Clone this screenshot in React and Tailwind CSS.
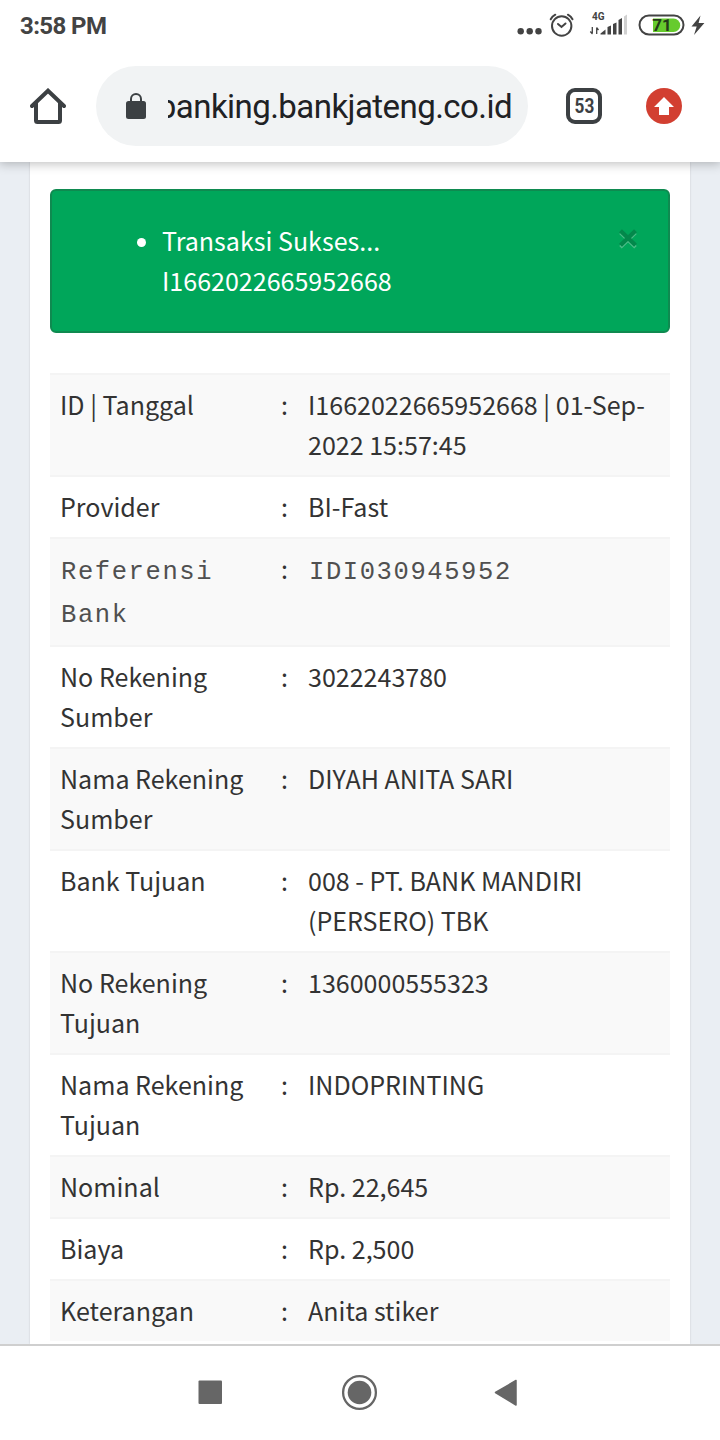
const rows = [
  ['ID | Tanggal', 'I1662022665952668 | 01-Sep-2022 15:57:45'],
  ['Provider', 'BI-Fast'],
  ['Referensi Bank', 'IDI030945952', true],
  ['No Rekening Sumber', '3022243780'],
  ['Nama Rekening Sumber', 'DIYAH ANITA SARI'],
  ['Bank Tujuan', '008 - PT. BANK MANDIRI (PERSERO) TBK'],
  ['No Rekening Tujuan', '1360000555323'],
  ['Nama Rekening Tujuan', 'INDOPRINTING'],
  ['Nominal', 'Rp. 22,645'],
  ['Biaya', 'Rp. 2,500'],
  ['Keterangan', 'Anita stiker'],
];

const MONO = "mt-[3px] -mb-[3px] font-['Liberation_Mono',monospace] text-[25.500px] leading-[43px] tracking-[1.600px] text-[#505050]";

function StatusBar() {
  return (
    <div className="flex h-[52px] items-center justify-between pl-5 font-['Roboto',sans-serif] text-[#434343]">
      <span className="text-[24px] leading-[28px] font-bold tracking-[-0.6px]">3:58 PM</span>
      <svg width="210" height="52" viewBox="510 0 210 52" className="shrink-0">
        <g fill="#434343">
          <circle cx="520.7" cy="31.3" r="3.2" />
          <circle cx="529.7" cy="31.3" r="3.2" />
          <circle cx="538.5" cy="31.3" r="3.2" />
        </g>
        <g fill="none" stroke="#434343" strokeWidth="2" strokeLinecap="round">
          <circle cx="561.7" cy="26" r="9.7" />
          <path d="M550.7 19.3Q552.3 16.3 555.3 14.7M572.5 19.3Q570.9 16.3 567.9 14.7M558 24l3.5 3 4-3.5" />
        </g>
        <text x="592" y="20" fontSize="10" fontWeight="700" fill="#434343">4G</text>
        <path d="M592.3 27v6M590.3 31.5l2.2 2.5M596.7 34v-6M598.5 30l-2-2.5" fill="none" stroke="#434343" strokeWidth="1.3" />
        <g fill="#434343">
          <path d="M600.5 34.5v-1l5-4v5z" />
          <path d="M607.5 34.5v-7.500l3.500-1.500v9z" />
          <path d="M613 34.500V24l3.500-1.500v12z" />
          <path d="M618.500 34.500V20l3.500-2v16.500z" />
        </g>
        <path d="M624 34.500V16.500l3-2v20z" fill="#d1d1d1" />
        <rect x="639.500" y="15.500" width="44" height="19" rx="9.500" fill="#fff" stroke="#434343" strokeWidth="2" />
        <path d="M653 18.500h20.500a6.700 6.700 0 0 1 0 13.400H653z" fill="#66cb2d" />
        <text x="662" y="31" fontSize="17" fontWeight="700" textAnchor="middle" fill="#243a1a">71</text>
        <path d="M700.500 15.500L691.500 26.500h5.200l-2.700 8.500 10.400-12h-5.800z" fill="#434343" />
      </svg>
    </div>
  );
}

function Toolbar() {
  return (
    <div className="flex h-[110px] items-center pb-[2px] font-['Roboto',sans-serif]">
      <svg width="36" height="36" viewBox="30 88 36 36" className="ml-[30px] shrink-0">
        <path d="M32 106L48 90.700L64 106M36 103v17.500q0 1.500 1.500 1.500h21q1.500 0 1.500-1.500V103" fill="none" stroke="#3c4043" strokeWidth="4" strokeLinejoin="miter" strokeLinecap="round" />
      </svg>
      <div className="ml-[30px] flex h-20 w-[432px] items-center rounded-full bg-[#f1f3f4] pl-[30px]">
        <svg width="20" height="26" viewBox="0 0 20 26" className="shrink-0">
          <path d="M5 10V6a5 5 0 0 1 10 0v4" fill="none" stroke="#3c4043" strokeWidth="2" />
          <rect y="8" width="20" height="18" rx="2.500" fill="#3c4043" />
        </svg>
        <div className="ml-[22px] flex w-[344px] justify-end overflow-hidden pt-[2px] text-[33px] leading-[44px] tracking-[-0.55px] whitespace-nowrap text-[#202124]">
          <span>banking.bankjateng.co.id</span>
        </div>
      </div>
      <div className="ml-[38px] flex size-9 items-center justify-center rounded-[9px] border-4 border-[#3c4043] text-[20px] leading-none font-bold text-[#3c4043]">
        <span className="scale-x-[0.86]">53</span>
      </div>
      <svg width="36" height="36" viewBox="0 0 36 36" className="ml-11 shrink-0">
        <circle cx="18" cy="18" r="18" fill="#d23f31" />
        <path d="M18 9l10 10h-5v8H13v-8H8z" fill="#fff" />
      </svg>
    </div>
  );
}

function Alert() {
  return (
    <div className="flex h-36 justify-between rounded-[6px] border-2 border-[#0f8a50] bg-[#00a65a] pt-[29px] pr-[29px] pl-[110px] text-white">
      <div className="relative">
        <span className="absolute top-[18px] -left-[25px] size-[9px] rounded-full bg-white" />
        <p>Transaksi Sukses...<br />I1662022665952668</p>
      </div>
      <svg width="22" height="22" viewBox="0 0 22 22" className="mt-[8px]">
        <path d="M3.500 4.700l15 14.500M18.500 4.700l-15 14.500" stroke="#4dbd88" strokeWidth="3.600" />
        <path d="M3.500 2.700l15 14.500M18.500 2.700l-15 14.500" stroke="#03884b" strokeWidth="4.200" />
      </svg>
    </div>
  );
}

export default function App() {
  return (
    <div className="flex h-[1440px] w-[720px] flex-col overflow-hidden bg-white">
      <header className="relative z-10 h-[162px] shrink-0 bg-white shadow-[0_1px_10px_1px_rgba(0,0,0,0.25)]">
        <StatusBar />
        <Toolbar />
      </header>
      <main className="h-[1182px] shrink-0 overflow-hidden bg-[#eaeef3] px-[30px]">
        <div className="h-full bg-white px-5 pt-[27px] font-['Noto_Sans_CJK_SC',sans-serif] text-[25.050px] leading-[40px] text-[#333] shadow-[0_0_2px_rgba(0,0,0,0.15)]">
          <Alert />
          <div className="mt-10">
            {rows.map(([label, value, mono]) => (
              <div key={label} className="flex border-t-2 border-[#f4f4f4] pt-[9px] pb-[11px] odd:bg-[#f9f9f9]">
                <div className={`w-[210px] shrink-0 pr-3 ${mono ? 'pl-[11px]' : 'pl-[10px]'} ${mono ? MONO : ''}`}>{label}</div>
                <div className="w-[48px] shrink-0 pl-px text-center">:</div>
                <div className={`w-[352px] ${mono ? 'pl-px' : ''} ${mono ? MONO : ''}`}>{value}</div>
              </div>
            ))}
          </div>
        </div>
      </main>
      <nav className="flex flex-1 justify-center border-t-2 border-[#cfcfcf] bg-white">
        <svg width="360" height="94" viewBox="180 1346 360 94">
          <rect x="198.500" y="1380.500" width="23.500" height="23.500" rx="1" fill="#666" />
          <circle cx="359.500" cy="1392.500" r="16.400" fill="none" stroke="#666" strokeWidth="2.300" />
          <circle cx="359.500" cy="1392.500" r="11.800" fill="#666" />
          <path d="M495.500 1392.500L516 1380.500v24.500z" fill="#666" stroke="#666" strokeWidth="1.500" strokeLinejoin="round" />
        </svg>
      </nav>
    </div>
  );
}
